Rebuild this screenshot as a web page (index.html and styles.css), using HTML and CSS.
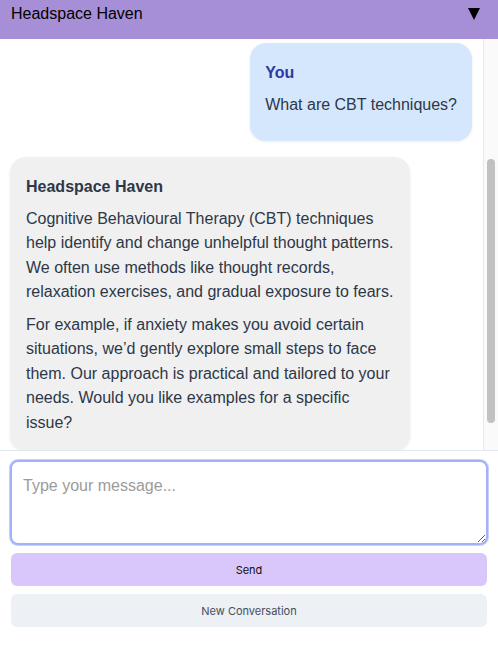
FILE: index.html
```html
<!DOCTYPE html>
<html lang="en">
<head>
<meta charset="utf-8">
<title>Headspace Haven</title>
<link rel="stylesheet" href="styles.css">
</head>
<body>
<div class="app">
  <header class="topbar">
    <span class="topbar-title">Headspace Haven</span>
    <svg class="topbar-caret" width="12" height="12" viewBox="0 0 12 12" aria-hidden="true"><polygon points="0,0 12,0 6,12" fill="#000"/></svg>
  </header>
  <div class="chat">
    <main class="messages">
      <div class="msg msg-user">
        <div class="msg-author">You</div>
        <p>What are CBT techniques?</p>
      </div>
      <div class="msg msg-bot">
        <div class="msg-author">Headspace Haven</div>
        <p>Cognitive Behavioural Therapy (CBT) techniques help identify and change unhelpful thought patterns. We often use methods like thought records, relaxation exercises, and gradual exposure to fears.</p>
        <p>For example, if anxiety makes you avoid certain situations, we’d gently explore small steps to face them. Our approach is practical and tailored to your needs. Would you like examples for a specific issue?</p>
      </div>
    </main>
    <div class="scrollbar" aria-hidden="true"><div class="scrollbar-thumb"></div></div>
  </div>
  <footer class="composer">
    <textarea class="composer-input" placeholder="Type your message..." autofocus></textarea>
    <button class="btn btn-send" type="button">Send</button>
    <button class="btn btn-new" type="button">New Conversation</button>
  </footer>
</div>
</body>
</html>
```

FILE: styles.css
```css
* { box-sizing: border-box; }
html, body { margin: 0; padding: 0; background: #fff; }
body { font-family: "Liberation Sans", Arial, Helvetica, sans-serif; color: #2d3748; }

.app {
  height: 648px;
  display: flex;
  flex-direction: column;
}

.topbar {
  flex: 0 0 39px;
  background: #a78fd7;
  display: flex;
  align-items: flex-start;
  justify-content: space-between;
  padding: 4px 18px 0 11px;
}
.topbar-title {
  font-size: 16px;
  line-height: 20px;
  color: #000;
}
.topbar-caret { margin-top: 4px; }

.chat {
  flex: 1 1 auto;
  min-height: 0;
  display: flex;
}

.messages {
  flex: 1 1 auto;
  min-width: 0;
  overflow: hidden;
  display: flex;
  flex-direction: column;
  gap: 16px;
  padding: 4px 11px 0 10px;
}

.scrollbar {
  flex: 0 0 15px;
  background: #fafafa;
  border-left: 1px solid #e8e8e8;
  padding: 120px 0 0 3px;
}
.scrollbar-thumb {
  width: 8px;
  height: 264px;
  border-radius: 4px;
  background: #c1c1c1;
}

.msg {
  flex: 0 0 auto;
  border-radius: 16px;
  box-shadow: 0 1px 3px rgba(0, 0, 0, 0.08);
  font-size: 16px;
  line-height: 24.5px;
}
.msg p { margin: 0 0 8px; }
.msg-bot p:last-child { margin-bottom: 0; }
.msg-author {
  font-weight: bold;
  line-height: 24px;
  margin-bottom: 8px;
}
.msg-user {
  align-self: flex-end;
  background: #d5e7fd;
  padding: 18px 15px 15px;
}
.msg-user .msg-author { color: #2c3a9f; }
.msg-bot {
  align-self: flex-start;
  width: 400px;
  background: #f0f0f0;
  padding: 18px 15px 16px 16px;
}
.msg-bot .msg-author { color: #2d3748; }

.composer {
  flex: 0 0 198px;
  border-top: 1px solid #e2e8f0;
  padding: 9px 10px 0 10px;
  display: flex;
  flex-direction: column;
  gap: 8px;
}
.composer-input {
  height: 85px;
  resize: vertical;
  border: 2px solid #a3b0fa;
  box-shadow: 0 0 0 1px rgba(163, 176, 250, 0.6);
  border-radius: 8px;
  padding: 12px 11px;
  font-family: "Liberation Sans", Arial, sans-serif;
  font-size: 16px;
  line-height: 24px;
  color: #2d3748;
  outline: none;
}
.composer-input::placeholder { color: #9b9b9b; }

.btn {
  height: 33px;
  margin: 0 1px;
  border: none;
  border-radius: 6px;
  font-family: Inter, "Liberation Sans", sans-serif;
  font-size: 11px;
}
.btn-send { background: #d9c7fc; color: #111; }
.btn-new { background: #edf0f5; color: #464d5b; }
```
